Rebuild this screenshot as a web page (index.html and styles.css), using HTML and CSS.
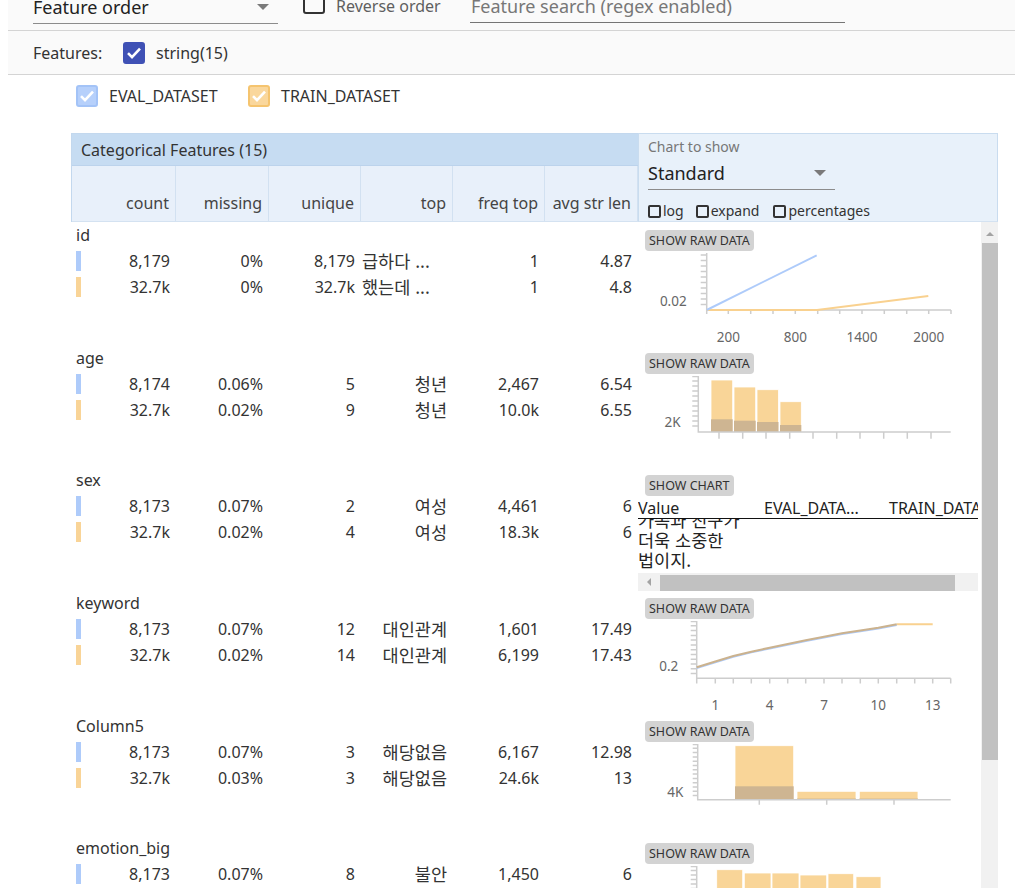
FILE: index.html
```html
<!DOCTYPE html>
<html lang="ko">
<head>
<meta charset="utf-8">
<title>Facets Overview</title>
<link rel="stylesheet" href="styles.css">
</head>
<body>
<div class="top">
  <div class="toolbar">
    <div class="select order-select"><span>Feature order</span><span class="caret"></span></div>
    <div class="reverse"><span class="box"></span><span class="reverse-label">Reverse order</span></div>
    <div class="search">Feature search (regex enabled)</div>
  </div>
  <div class="features">
    <span class="features-label">Features:</span>
    <span class="box box-indigo"><svg class="check" viewBox="0 0 18 18" width="18" height="18"><path d="M3 9.2l4 4 8-8.6"/></svg></span>
    <span class="features-type">string(15)</span>
  </div>
</div>

<div class="legend">
  <div class="legend-item legend-eval"><span class="box box-eval"><svg class="check" viewBox="0 0 18 18" width="18" height="18"><path d="M3 9.2l4 4 8-8.6"/></svg></span><span class="legend-label">EVAL_DATASET</span></div>
  <div class="legend-item"><span class="box box-train"><svg class="check" viewBox="0 0 18 18" width="18" height="18"><path d="M3 9.2l4 4 8-8.6"/></svg></span><span class="legend-label">TRAIN_DATASET</span></div>
</div>

<div class="table">
  <div class="thead">
    <div class="thead-stats">
      <div class="band">Categorical Features (15)</div>
      <div class="colheads">
        <div class="c w1 h1">count</div>
        <div class="c w2">missing</div>
        <div class="c w3">unique</div>
        <div class="c w4">top</div>
        <div class="c w5">freq top</div>
        <div class="c w6">avg str len</div>
      </div>
    </div>
    <div class="ctrl">
      <div class="ctrl-label">Chart to show</div>
      <div class="select std-select"><span>Standard</span><span class="caret"></span></div>
      <div class="opts">
        <span class="opt"><span class="sbox"></span>log</span>
        <span class="opt"><span class="sbox"></span>expand</span>
        <span class="opt"><span class="sbox"></span>percentages</span>
      </div>
    </div>
  </div>

  <div class="tbody">
    <div class="rows">

      <!-- id -->
      <div class="row">
        <div class="stats">
          <div class="fname">id</div>
          <div class="line">
            <div class="c w1"><span class="swatch swatch-eval"></span><span>8,179</span></div>
            <div class="c w2">0%</div>
            <div class="c w3">8,179</div>
            <div class="c w4 trunc ko">급하다 ...</div>
            <div class="c w5">1</div>
            <div class="c w6">4.87</div>
          </div>
          <div class="line">
            <div class="c w1"><span class="swatch swatch-train"></span><span>32.7k</span></div>
            <div class="c w2">0%</div>
            <div class="c w3">32.7k</div>
            <div class="c w4 trunc ko">했는데 ...</div>
            <div class="c w5">1</div>
            <div class="c w6">4.8</div>
          </div>
        </div>
        <div class="chart">
          <span class="btn">SHOW RAW DATA</span>
          <svg class="plot" width="343" height="100" viewBox="0 0 343 100">
            <path class="axis" d="M62.7 2H68.7M62.7 7.5H68.7M62.7 13H68.7M62.7 18.5H68.7M62.7 24H68.7M62.7 29.5H68.7M62.7 35H68.7M62.7 40.5H68.7M62.7 46H68.7M62.7 51.5H68.7"/>
            <path class="axis" d="M68.7 0V57H313M68.7 57v4M90.3 57v4M112.7 57v4M135 57v4M157.3 57v4M179.7 57v4M201.7 57v4M224 57v4M246.3 57v4M268.7 57v4M290.7 57v4M313 57v4"/>
            <polyline class="ln-train" points="68.7,57 179,57 290.3,43"/>
            <line class="ln-eval" x1="68.7" y1="57" x2="178.7" y2="2.3"/>
            <text class="lbl" x="48.7" y="52.5" text-anchor="end">0.02</text>
            <text class="lbl" x="90.3" y="89" text-anchor="middle">200</text>
            <text class="lbl" x="157.3" y="89" text-anchor="middle">800</text>
            <text class="lbl" x="224" y="89" text-anchor="middle">1400</text>
            <text class="lbl" x="290.7" y="89" text-anchor="middle">2000</text>
          </svg>
        </div>
      </div>

      <!-- age -->
      <div class="row">
        <div class="stats">
          <div class="fname">age</div>
          <div class="line">
            <div class="c w1"><span class="swatch swatch-eval"></span><span>8,174</span></div>
            <div class="c w2">0.06%</div>
            <div class="c w3">5</div>
            <div class="c w4 ko">청년</div>
            <div class="c w5">2,467</div>
            <div class="c w6">6.54</div>
          </div>
          <div class="line">
            <div class="c w1"><span class="swatch swatch-train"></span><span>32.7k</span></div>
            <div class="c w2">0.02%</div>
            <div class="c w3">9</div>
            <div class="c w4 ko">청년</div>
            <div class="c w5">10.0k</div>
            <div class="c w6">6.55</div>
          </div>
        </div>
        <div class="chart">
          <span class="btn">SHOW RAW DATA</span>
          <svg class="plot" width="343" height="100" viewBox="0 0 343 100">
            <path class="axis" d="M54.3 0.5H60.3M54.3 5H60.3M54.3 10H60.3M54.3 15H60.3M54.3 20H60.3M54.3 25H60.3M54.3 30H60.3M54.3 35H60.3M54.3 40H60.3M54.3 45H60.3M54.3 50H60.3"/>
            <rect class="bar-train" x="73" y="4" width="21.7" height="52"/>
            <rect class="bar-train" x="96" y="11" width="21.7" height="45"/>
            <rect class="bar-train" x="119" y="13.7" width="21.5" height="42.3"/>
            <rect class="bar-train" x="142" y="25.7" width="21.3" height="30.3"/>
            <rect class="bar-both" x="73" y="43.3" width="21.7" height="12.7"/>
            <rect class="bar-both" x="96" y="44.7" width="21.7" height="11.3"/>
            <rect class="bar-both" x="119" y="46" width="21.5" height="10"/>
            <rect class="bar-both" x="142" y="49" width="21.3" height="7"/>
            <path class="axis" d="M60.3 0V56H312.7M81 56v6.7M104.7 56v6.7M128 56v6.7M151.7 56v6.7M175 56v6.7M198.7 56v6.7M222 56v6.7M245.7 56v6.7M269.3 56v6.7M293 56v6.7"/>
            <text class="lbl" x="42.7" y="50.5" text-anchor="end">2K</text>
          </svg>
        </div>
      </div>

      <!-- sex -->
      <div class="row">
        <div class="stats">
          <div class="fname">sex</div>
          <div class="line">
            <div class="c w1"><span class="swatch swatch-eval"></span><span>8,173</span></div>
            <div class="c w2">0.07%</div>
            <div class="c w3">2</div>
            <div class="c w4 ko">여성</div>
            <div class="c w5">4,461</div>
            <div class="c w6">6</div>
          </div>
          <div class="line">
            <div class="c w1"><span class="swatch swatch-train"></span><span>32.7k</span></div>
            <div class="c w2">0.02%</div>
            <div class="c w3">4</div>
            <div class="c w4 ko">여성</div>
            <div class="c w5">18.3k</div>
            <div class="c w6">6</div>
          </div>
        </div>
        <div class="chart">
          <span class="btn">SHOW CHART</span>
          <div class="rawbox">
            <div class="rawview">
              <div class="rawhead"><span class="rh-value">Value</span><span class="rh-eval">EVAL_DATA...</span><span class="rh-train">TRAIN_DATASET</span></div>
              <div class="rawbody ko">가족과 친구가<br>더욱 소중한<br>법이지.</div>
            </div>
            <div class="hscroll"><span class="larrow"></span><span class="hthumb"></span></div>
          </div>
        </div>
      </div>

      <!-- keyword -->
      <div class="row">
        <div class="stats">
          <div class="fname">keyword</div>
          <div class="line">
            <div class="c w1"><span class="swatch swatch-eval"></span><span>8,173</span></div>
            <div class="c w2">0.07%</div>
            <div class="c w3">12</div>
            <div class="c w4 ko">대인관계</div>
            <div class="c w5">1,601</div>
            <div class="c w6">17.49</div>
          </div>
          <div class="line">
            <div class="c w1"><span class="swatch swatch-train"></span><span>32.7k</span></div>
            <div class="c w2">0.02%</div>
            <div class="c w3">14</div>
            <div class="c w4 ko">대인관계</div>
            <div class="c w5">6,199</div>
            <div class="c w6">17.43</div>
          </div>
        </div>
        <div class="chart">
          <span class="btn">SHOW RAW DATA</span>
          <svg class="plot" width="343" height="100" viewBox="0 0 343 100">
            <path class="axis" d="M52.7 0.5H58.7M52.7 4.8H58.7M52.7 9.6H58.7M52.7 14.4H58.7M52.7 19.1H58.7M52.7 23.9H58.7M52.7 28.7H58.7M52.7 33.5H58.7M52.7 38.3H58.7M52.7 43H58.7M52.7 47.8H58.7M52.7 52.6H58.7"/>
            <path class="axis" d="M58.7 0V57.3H312.7M58.7 57.3v5.2M77.3 57.3v5.2M95.3 57.3v5.2M113.3 57.3v5.2M131.7 57.3v5.2M149.7 57.3v5.2M167.7 57.3v5.2M186 57.3v5.2M204 57.3v5.2M222.3 57.3v5.2M240.3 57.3v5.2M258.7 57.3v5.2M276.7 57.3v5.2M294.7 57.3v5.2M312.7 57.3v5.2"/>
            <polyline class="ln-train" points="258.7,3.3 294.7,3.3"/>
            <polyline class="ln-eval" points="58.7,47 77.3,41.2 95.3,35.7 113.3,31.4 131.7,27.4 149.7,23.7 167.7,20 186,16.4 204,13 222.3,10.2 240.3,7.4 258.7,4"/>
            <polyline class="ln-both" points="58.7,46.3 77.3,40.5 95.3,35 113.3,30.7 131.7,26.7 149.7,23 167.7,19.3 186,15.7 204,12.3 222.3,9.5 240.3,6.7 258.7,3.3"/>
            <text class="lbl" x="40.3" y="50" text-anchor="end">0.2</text>
            <text class="lbl" x="77.3" y="89" text-anchor="middle">1</text>
            <text class="lbl" x="131.7" y="89" text-anchor="middle">4</text>
            <text class="lbl" x="186" y="89" text-anchor="middle">7</text>
            <text class="lbl" x="240.3" y="89" text-anchor="middle">10</text>
            <text class="lbl" x="294.7" y="89" text-anchor="middle">13</text>
          </svg>
        </div>
      </div>

      <!-- Column5 -->
      <div class="row">
        <div class="stats">
          <div class="fname">Column5</div>
          <div class="line">
            <div class="c w1"><span class="swatch swatch-eval"></span><span>8,173</span></div>
            <div class="c w2">0.07%</div>
            <div class="c w3">3</div>
            <div class="c w4 ko">해당없음</div>
            <div class="c w5">6,167</div>
            <div class="c w6">12.98</div>
          </div>
          <div class="line">
            <div class="c w1"><span class="swatch swatch-train"></span><span>32.7k</span></div>
            <div class="c w2">0.03%</div>
            <div class="c w3">3</div>
            <div class="c w4 ko">해당없음</div>
            <div class="c w5">24.6k</div>
            <div class="c w6">13</div>
          </div>
        </div>
        <div class="chart">
          <span class="btn">SHOW RAW DATA</span>
          <svg class="plot" width="343" height="100" viewBox="0 0 343 100">
            <path class="axis" d="M54.7 0.5H59.7M54.7 4.3H59.7M54.7 8.6H59.7M54.7 12.9H59.7M54.7 17.2H59.7M54.7 21.5H59.7M54.7 25.8H59.7M54.7 30.1H59.7M54.7 34.4H59.7M54.7 38.7H59.7M54.7 43H59.7M54.7 47.3H59.7M54.7 51.6H59.7"/>
            <rect class="bar-train" x="97" y="1.7" width="58.7" height="54"/>
            <rect class="bar-both" x="97" y="42.3" width="58.7" height="13.4"/>
            <rect class="bar-train" x="159" y="47.3" width="59" height="8.4"/>
            <rect class="bar-both" x="159" y="54.6" width="59" height="1.1"/>
            <rect class="bar-train" x="221.3" y="47.3" width="58.7" height="8.4"/>
            <rect class="bar-both" x="221.3" y="54.6" width="58.7" height="1.1"/>
            <path class="axis" d="M59.7 0V55.7H312.7M121.3 55.7v5M188.7 55.7v5M256 55.7v5"/>
            <text class="lbl" x="45.3" y="53" text-anchor="end">4K</text>
          </svg>
        </div>
      </div>

      <!-- emotion_big -->
      <div class="row">
        <div class="stats">
          <div class="fname">emotion_big</div>
          <div class="line">
            <div class="c w1"><span class="swatch swatch-eval"></span><span>8,173</span></div>
            <div class="c w2">0.07%</div>
            <div class="c w3">8</div>
            <div class="c w4 ko">불안</div>
            <div class="c w5">1,450</div>
            <div class="c w6">6</div>
          </div>
          <div class="line">
            <div class="c w1"><span class="swatch swatch-train"></span><span>32.7k</span></div>
            <div class="c w2">0.02%</div>
            <div class="c w3">8</div>
            <div class="c w4 ko">불안</div>
            <div class="c w5">5,806</div>
            <div class="c w6">6</div>
          </div>
        </div>
        <div class="chart">
          <span class="btn">SHOW RAW DATA</span>
          <svg class="plot" width="343" height="100" viewBox="0 0 343 100">
            <path class="axis" d="M52.7 0.5H58.7M52.7 4.5H58.7M52.7 9H58.7M52.7 13.5H58.7M52.7 18H58.7M52.7 22.5H58.7M52.7 27H58.7M52.7 31.5H58.7M52.7 36H58.7M52.7 40.5H58.7M52.7 45H58.7M52.7 49.5H58.7"/>
            <rect class="bar-train" x="78.7" y="3.7" width="26" height="52.3"/>
            <rect class="bar-train" x="106.3" y="7" width="26.7" height="49"/>
            <rect class="bar-train" x="134" y="7" width="27" height="49"/>
            <rect class="bar-train" x="162" y="9" width="26.7" height="47"/>
            <rect class="bar-train" x="190" y="7.7" width="25.7" height="48.3"/>
            <rect class="bar-train" x="218" y="10.7" width="25" height="45.3"/>
            <path class="axis" d="M58.7 0V56H312.7"/>
          </svg>
        </div>
      </div>

    </div>
    <div class="vscroll"><span class="uarrow"></span><span class="vthumb"></span></div>
  </div>
</div>
</body>
</html>
```

FILE: styles.css
```css
html, body {
  margin: 0;
  padding: 0;
  background: #fff;
  height: 888px;
  overflow: hidden;
}
body {
  font-family: "Noto Sans", "Noto Sans CJK KR", sans-serif;
  font-size: 16px;
  color: #333;
}
.ko {
  font-family: "Noto Sans CJK KR", "Noto Sans", sans-serif;
  font-size: 17.5px;
}

/* ---------- top toolbar ---------- */
.top {
  margin: -20px 0 0 8px;
  background: #fafafa;
}
.toolbar {
  height: 50px;
  display: flex;
  align-items: flex-start;
  padding-left: 25px;
  border-bottom: 1px solid #d4d4d4;
}
.select {
  display: flex;
  align-items: center;
  justify-content: space-between;
  box-sizing: border-box;
  line-height: 24px;
  padding-bottom: 4px;
  border-bottom: 1px solid #8c8c8c;
  font-size: 18px;
  color: #222;
}
.order-select {
  width: 245px;
  margin-top: 15px;
}
.caret {
  width: 0;
  height: 0;
  border-left: 6px solid transparent;
  border-right: 6px solid transparent;
  border-top: 6px solid #7a7a7a;
  margin-right: 9px;
}
.reverse {
  display: flex;
  align-items: flex-start;
  width: 167px;
  margin-left: 25px;
  margin-top: 12px;
}
.reverse-label {
  margin-left: 11px;
  margin-top: 3px;
  line-height: 22px;
  color: #5f5f5f;
}
.search {
  width: 375px;
  box-sizing: border-box;
  margin-top: 14px;
  line-height: 24px;
  padding: 0 0 4px 1px;
  border-bottom: 1px solid #757575;
  font-size: 18px;
  color: #777;
}

.box {
  flex: none;
  width: 22px;
  height: 22px;
  box-sizing: border-box;
  border: 2px solid #333;
  border-radius: 3px;
  display: flex;
  align-items: center;
  justify-content: center;
}
.check path {
  fill: none;
  stroke: #fff;
  stroke-width: 2.6;
}
.box-indigo {
  background: #3f51b5;
  border-color: #3f51b5;
}
.box-eval {
  background: #b6d0fb;
  border-color: #a3c3f7;
}
.box-train {
  background: #fad79c;
  border-color: #f5c46f;
}

.features {
  height: 43px;
  display: flex;
  align-items: center;
  padding-left: 25px;
  border-bottom: 1px solid #d4d4d4;
}
.features-label {
  width: 90px;
  line-height: 22px;
}
.features-type {
  margin-left: 11px;
  line-height: 22px;
}

/* ---------- legend ---------- */
.legend {
  display: flex;
  align-items: center;
  padding: 10px 0 0 76px;
  height: 22px;
}
.legend-item {
  display: flex;
  align-items: center;
}
.legend-eval {
  width: 172px;
}
.legend-label {
  margin-left: 11px;
  line-height: 22px;
}

/* ---------- table ---------- */
.table {
  margin: 26px 0 0 71px;
  width: 927px;
}
.thead {
  display: flex;
  height: 89px;
  box-sizing: border-box;
}
.thead-stats {
  width: 567px;
  box-sizing: border-box;
  border-left: 1px solid #c3d8ee;
  border-top: 1px solid #c3d8ee;
}
.band {
  height: 31px;
  line-height: 33px;
  padding-left: 9px;
  background: #c6dcf2;
  border-bottom: 1px solid #bcd3ec;
  color: #333;
}
.colheads {
  display: flex;
  height: 56px;
  background: #e8f0fa;
  border-bottom: 1px solid #d4e2f1;
  box-sizing: border-box;
}
.colheads .c {
  border-right: 1px solid #d2e1f1;
  line-height: 24px;
  padding-top: 25px;
  color: #444;
}
.colheads .h1 {
  width: 104px;
}

.c {
  box-sizing: border-box;
  padding-right: 6px;
  text-align: right;
  white-space: nowrap;
  flex: none;
}
.w1 { width: 105px; }
.w2 { width: 93px; }
.w3 { width: 92px; }
.w4 { width: 92px; }
.w5 { width: 92px; }
.w6 { width: 93px; }

.ctrl {
  width: 360px;
  box-sizing: border-box;
  padding: 3px 0 0 9px;
  background: #e8f1fa;
  border: 1px solid #c9dcef;
  border-bottom: 1px solid #d4e2f1;
}
.ctrl-label {
  font-size: 14px;
  line-height: 20px;
  color: #777;
}
.std-select {
  width: 187px;
  margin-top: 4px;
}
.opts {
  display: flex;
  margin-top: 12px;
  font-size: 14px;
  line-height: 18px;
  color: #333;
}
.opt {
  display: flex;
  align-items: center;
  margin-right: 12px;
}
.opt:nth-child(2) {
  margin-right: 14px;
}
.sbox {
  width: 13px;
  height: 13px;
  box-sizing: border-box;
  border: 2px solid #333;
  border-radius: 2px;
  margin-right: 2px;
}

/* ---------- body rows ---------- */
.tbody {
  display: flex;
  height: 666px;
  overflow: hidden;
}
.rows {
  width: 910px;
}
.row {
  display: flex;
  height: 122.66px;
}
.stats {
  width: 567px;
  flex: none;
}
.fname {
  line-height: 26px;
  padding-left: 5px;
}
.line {
  display: flex;
  height: 26px;
  line-height: 26px;
  align-items: center;
}
.line .w1 {
  display: flex;
  align-items: center;
  justify-content: space-between;
  padding-left: 5px;
}
.swatch {
  width: 5px;
  height: 20px;
}
.swatch-eval { background: #aecbfa; }
.swatch-train { background: #f9d497; }
.trunc {
  text-align: left;
  padding-left: 1px;
  overflow: hidden;
}

.chart {
  width: 343px;
  flex: none;
  padding-top: 8px;
  box-sizing: border-box;
}
.btn {
  display: inline-block;
  margin-left: 7px;
  height: 21px;
  line-height: 21px;
  padding: 0 4px;
  background: #d3d3d3;
  border-radius: 4px;
  font-size: 12.5px;
  color: #333;
  vertical-align: top;
}
.plot {
  display: block;
  margin-top: 1px;
}
.axis {
  fill: none;
  stroke: #cdcdcd;
  stroke-width: 1.5;
}
.lbl {
  font-family: "Noto Sans", sans-serif;
  font-size: 13.5px;
  fill: #666;
}
.ln-eval {
  fill: none;
  stroke: #aecbfa;
  stroke-width: 2;
}
.ln-train {
  fill: none;
  stroke: #f9d18f;
  stroke-width: 2;
}
.ln-both {
  fill: none;
  stroke: #cbb28e;
  stroke-width: 2;
}
.bar-train {
  fill: #f9d598;
  stroke: #fff;
  stroke-width: 0.8;
}
.bar-both {
  fill: #ceb592;
}

/* raw data table */
.rawbox {
  margin-top: 1px;
}
.rawview {
  width: 340px;
  height: 75px;
  overflow: hidden;
}
.rawhead {
  position: relative;
  z-index: 1;
  display: flex;
  height: 20px;
  line-height: 20px;
  background: #fff;
  border-bottom: 1px solid #111;
  white-space: nowrap;
  color: #222;
}
.rh-value { width: 126px; flex: none; }
.rh-eval { width: 125px; flex: none; }
.rh-train { flex: none; }
.rawbody {
  margin-top: -9px;
  line-height: 20px;
  color: #222;
}
.hscroll {
  display: flex;
  align-items: center;
  width: 340px;
  height: 18px;
  background: #f1f1f1;
}
.larrow {
  width: 0;
  height: 0;
  border-top: 4px solid transparent;
  border-bottom: 4px solid transparent;
  border-right: 4px solid #a3a3a3;
  margin-left: 9px;
}
.hthumb {
  width: 295px;
  height: 16px;
  margin: 2px 0 0 9px;
  background: #c1c1c1;
}

.vscroll {
  width: 17px;
  flex: none;
  display: flex;
  flex-direction: column;
  align-items: center;
  background: #f1f1f1;
}
.uarrow {
  width: 0;
  height: 0;
  border-left: 4px solid transparent;
  border-right: 4px solid transparent;
  border-bottom: 4px solid #a3a3a3;
  margin-top: 10px;
}
.vthumb {
  width: 16px;
  height: 517px;
  margin-top: 7px;
  background: #c1c1c1;
}
```
